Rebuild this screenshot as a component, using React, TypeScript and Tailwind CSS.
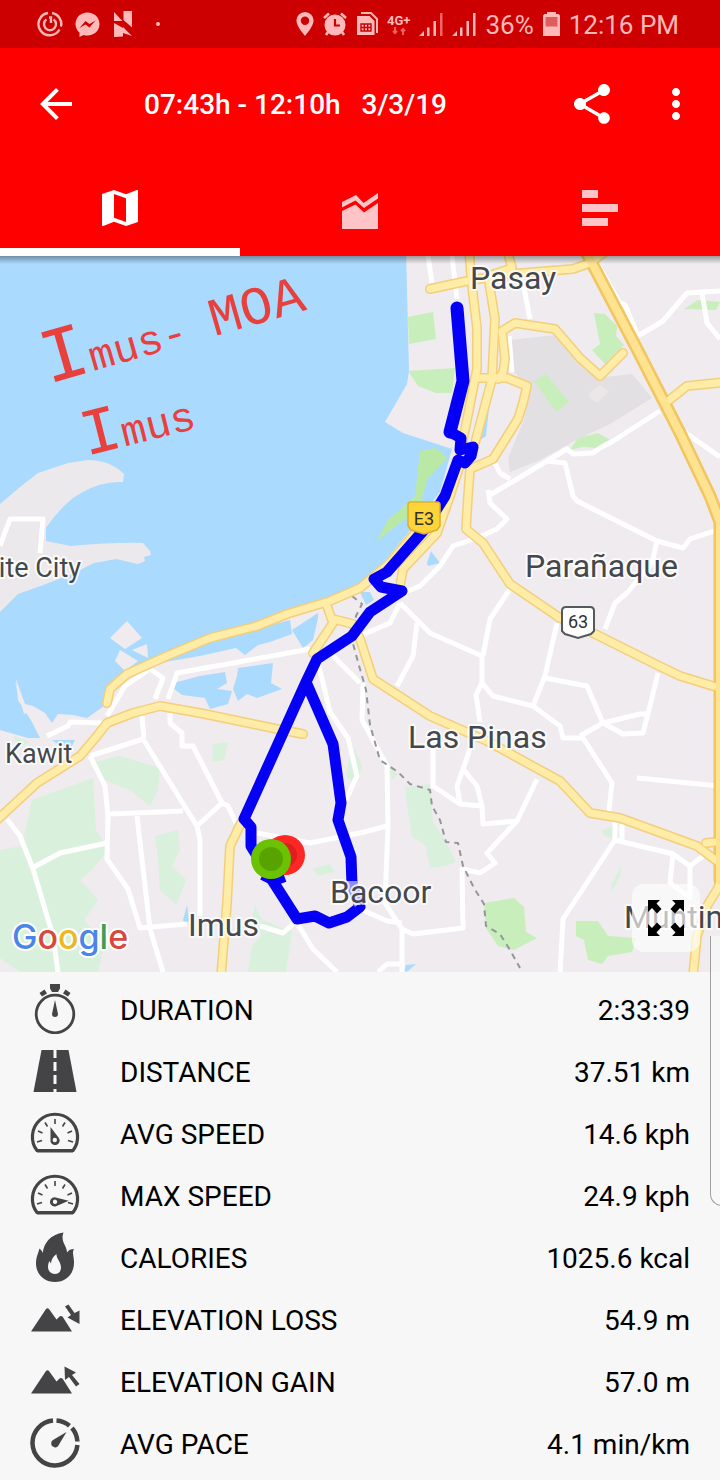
import type { ReactNode } from "react";
import { MdArrowBack, MdMap, MdMoreVert, MdShare } from "react-icons/md";

const MAJOR_ROADS = [
  "469,250 472,286 477,328 477,369 473,389 465,430 460,452",
  "507,250 512,268 488,276 495,319 492,379 475,443",
  "430,289 467,281 510,274 573,269 590,263 605,252",
  "498,379 503,373 505,359 502,331 515,323 555,329 580,358 600,376 623,353",
  "475,378 507,378 527,386 523,403 518,419 493,459 470,469 468,496 466,529 483,543 510,584 560,618 593,633 653,663 680,676 726,690",
  "668,401 687,386 726,382",
  "463,456 450,496 437,533 403,569 400,586",
  "430,512 415,533 390,563 360,588 330,601 287,614 257,626 210,638 167,656 127,674 110,689 107,703",
  "327,606 333,623 313,653",
  "333,619 353,624 360,639 373,679 430,716 487,741 560,781 590,813 620,818 697,846 726,868",
  "-4,821 37,783 80,756 97,736 107,723 133,713 160,706 200,713 277,729 303,734",
  "241,823 230,846 227,903 221,976",
  "706,843 726,841",
  "726,862 718,888 707,906 697,936 693,976",
];

const HIGHWAYS = ["584,248 637,349 680,433 710,496 720,522 720,880"];

const MINOR_ROADS = [
  "428,256 432,283",
  "452,256 457,299",
  "523,283 530,319",
  "509,336 512,372",
  "593,256 620,303 625,305 638,336 663,321 687,293 720,291",
  "702,293 707,323 720,339",
  "488,496 517,479 547,461 567,449 573,454 593,453 600,448 613,441 660,411",
  "547,461 565,463 573,496 577,501 657,541 683,548 690,539 720,529",
  "493,459 500,473 510,479",
  "683,431 720,457",
  "488,490 490,503 507,519 497,529 477,538 453,546 440,566 420,586 400,594",
  "400,603 430,633 482,656 482,683 493,696 533,706 560,726 563,738 583,738 612,783 608,820",
  "510,589 490,619 483,656",
  "417,623 413,656 397,686",
  "482,683 476,695 480,722",
  "557,623 545,676 533,706",
  "545,678 587,686 603,723 640,714 648,714 658,673",
  "580,736 603,723 623,734 643,733 648,714",
  "657,541 652,563 627,593 615,603 605,629",
  "360,636 390,623 400,603",
  "363,683 362,720 387,766 388,826 385,903 402,929 402,972",
  "257,833 310,843 360,833 387,826",
  "433,749 433,786 460,804 482,806 483,824 517,821 537,779",
  "470,749 457,786 460,804",
  "463,769 477,786 482,806",
  "517,821 487,853 495,863 480,873 462,869 463,928 413,934 402,929",
  "637,778 720,786",
  "615,820 615,840 563,919 560,972",
  "622,824 622,840",
  "615,840 673,854 690,866 703,856",
  "673,854 670,883 690,898 690,866",
  "360,909 387,921 402,923",
  "378,972 387,964 402,964",
  "0,546 10,519 43,519 40,553",
  "107,716 125,686 150,669 163,678 155,699",
  "168,699 177,673 233,663 310,649",
  "47,736 68,726 70,722 103,723",
  "142,716 144,738",
  "170,713 170,723 182,733 182,746 193,746 222,803 228,806 236,823",
  "318,662 330,712 348,738 357,776 346,800",
  "333,656 360,683",
  "90,756 143,739 197,826 200,840 200,916",
  "197,826 222,803",
  "110,814 183,811",
  "90,756 105,786 108,816 107,859 128,889 140,928 187,924",
  "137,816 143,869 150,929 163,972",
  "7,819 20,836 33,869 53,936 58,972",
  "32,868 60,853 107,843",
  "260,926 283,933 293,924",
  "297,923 313,949 337,972",
];

const WATER = [
  "0,250 406,250 409,371 407,384 385,422 403,433 452,449 440,492 412,528 372,577 350,597 330,600 260,624 210,637 127,673 108,690 104,706 87,718 73,715 58,714 52,723 45,713 33,706 25,704 16,679 18,700 32,722 40,738 28,738 0,730",
  "177,682 200,676 225,672 227,683 217,689 232,691 228,704 210,709 205,698 182,695 173,688",
  "238,668 273,663 271,683 282,689 257,698 247,694 238,701 233,689 237,676",
  "292,630 318,613 318,618 313,640 303,648",
  "150,664 200,644 260,628 290,620 292,634 270,642 258,645 245,655 236,648 200,656 165,662",
  "427,563 431,551 440,563 428,566",
  "360,592 370,592 374,600 366,605",
  "183,920 187,905 189,921 185,924",
  "404,972 406,965 416,964 408,971",
  "52,740 75,740 70,750 60,746",
  "484,420 489,408 486,436 480,440",
];

const ISLANDS = [
  "127,621 142,638 125,649 110,638",
  "147,644 148,658 132,650",
  "120,650 138,661 125,671 115,661",
  "281,642 292,635 295,641",
  "14,679 22,702 30,712 24,714",
];

const FARMS = [
  "32,800 60,790 93,778 96,830 108,850 92,870 80,880 98,900 84,920 104,944 98,972 20,972 0,958 0,850 22,846",
  "94,762 120,756 160,768 158,790 150,806 130,790 100,778",
  "155,836 178,830 180,850 172,866 186,880 176,905 160,890 158,860",
  "213,744 228,742 224,760 212,762",
  "255,905 262,920 292,932 286,972 248,972 252,946 262,935 250,925",
  "405,787 430,784 433,822 444,838 456,862 446,866 430,868 426,846 412,836 408,812",
  "313,868 330,864 334,872 318,876",
  "352,744 362,766 356,786 346,776",
  "602,830 613,826 612,838 604,836",
  "611,886 622,864 620,876 612,892",
  "388,766 398,774 392,780",
  "14,736 30,742 18,748",
];

const PARKS = [
  "408,317 433,312 436,339 409,344",
  "408,371 455,368 452,393 436,393 418,386",
  "594,313 605,314 617,326 616,336 624,345 605,364 592,350 600,344",
  "534,381 546,374 569,402 556,412",
  "570,450 578,438 598,433 612,441 598,448 583,447",
  "684,309 698,300 720,302 716,310",
  "484,903 514,898 524,907 526,932 537,938 514,950 498,946 486,928",
  "576,921 598,921 608,936 636,938 632,952 608,956 602,964 588,960 584,940 576,936",
];

const AIRPORT = [
  "510,340 556,335 580,360 596,378 632,374 652,398 610,424 576,440 540,460 510,472 508,458 524,420 530,388 512,370",
];

const ROUTE =
  "457,308 463,381 450,432 461,438 460,450 473,447 471,456 465,463 458,460 445,496 423,531 387,572 374,579 381,587 402,591 370,612 352,636 317,659 306,682 244,819 251,827 251,846 274,883 297,919 315,916 329,923 347,917 360,907 352,885 351,857 338,820 341,803 333,744 306,682";

const BORDER =
  "352,596 362,604 356,616 352,640 358,662 366,690 370,725 380,760 398,772 410,784 430,790 432,806 440,820 446,842 458,843 463,866 474,888 484,904 486,926 500,934 510,950 520,968";

const LABELS: {
  name: string;
  x: number;
  y: number;
  size: number;
  anchor?: "end";
}[] = [
  { name: "Pasay", x: 470, y: 289, size: 32 },
  { name: "ite City", x: 81, y: 577, size: 27, anchor: "end" },
  { name: "Parañaque", x: 525, y: 577, size: 32 },
  { name: "Las Pinas", x: 408, y: 748, size: 32 },
  { name: "Kawit", x: 5, y: 763, size: 27 },
  { name: "Bacoor", x: 330, y: 903, size: 32 },
  { name: "Imus", x: 188, y: 936, size: 32 },
  { name: "Muntin", x: 624, y: 928, size: 32 },
];

export default function App() {
  return (
    <div className="relative w-full overflow-hidden bg-[#f7f7f7] font-['Roboto',sans-serif] text-black">
      <StatusBar />
      <Header />
      <RouteMap />
      <Stats />
      {/* edge panel handle */}
      <div
        aria-hidden
        className="absolute -right-3 bottom-[274px] h-[270px] w-[22px] rounded-bl-xl border-b border-l border-[#a0a0a0] bg-[#f8f8f8]/80"
      />
    </div>
  );
}

function StatusBar() {
  return (
    <div className="flex h-12 items-center justify-between bg-[#cc0000] pr-[41px] pl-[37px] text-[26px] text-[#ffb9b9]">
      <div className="flex items-center gap-3">
        <svg className="h-[26px] w-[26px]" viewBox="0 0 26 26" fill="none" stroke="currentColor" strokeWidth="2.4">
          <path d="M11 2A11.200 11.200 0 1 0 22.500 18.500M15 2a11.200 11.200 0 0 1 9 13.500" />
          <path d="M9.400 8.400a6 6 0 1 0 7.200 0M12 6.500h2v5.500" />
        </svg>
        <svg className="h-[25px] w-[25px]" viewBox="0 0 25 25">
          <path
            fill="currentColor"
            d="M12.5.5C5.600.5.500 5.500.500 12c0 3.600 1.500 6.500 4 8.600V25l4-2.100c1.200.400 2.600.600 4 .600 6.900 0 12-5 12-11.500S19.400.5 12.500.5z"
          />
          <path d="M4.500 16l6-7 4 3 6-3.500-6 7-4-3z" fill="#cc0000" />
        </svg>
        <svg className="ml-0.5 h-[26px] w-[18px]" viewBox="0 0 18 26" fill="currentColor">
          <path d="M0 1l8.500 9H0zM9.500 0H18v16.500L9.500 9zM0 12l9 5v8.500l-9 .5zM9 16l9 9-9-3z" />
        </svg>
        <span className="ml-3 h-1 w-1 rounded-full bg-[#ffb9b9]" />
      </div>
      <div className="flex items-center gap-[9px]">
        <svg className="h-6 w-[18px]" viewBox="0 0 18 24" fill="currentColor" fillRule="evenodd">
          <path d="M9 0a8.600 8.600 0 0 0-8.600 8.600C.400 14.500 9 24 9 24s8.600-9.500 8.600-15.400A8.600 8.600 0 0 0 9 0zm0 4.600a4.200 4.200 0 1 1 0 8.400 4.200 4.200 0 0 1 0-8.400z" />
        </svg>
        <svg className="h-6 w-6" viewBox="0 0 24 24">
          <circle cx="12" cy="13" r="10.500" fill="currentColor" />
          <path d="M1 6l5-4.500M23 6l-5-4.500M5 20l-2 3M19 20l2 3" stroke="currentColor" strokeWidth="2.600" />
          <path d="M12 7v6.500h5" fill="none" stroke="#cc0000" strokeWidth="2.200" />
        </svg>
        <svg className="h-6 w-[22px]" viewBox="0 0 22 24" fill="none" stroke="currentColor" strokeWidth="2">
          <path d="M5 1h10l6 6v14" />
          <path d="M2 5h11l4.500 4.500V22H2z" fill="currentColor" />
          <path d="M5 12h10v7H5zM8.300 12v7M11.700 12v7M5 15.500h10" stroke="#cc0000" strokeWidth="1.400" />
        </svg>
        <div className="flex flex-col items-center">
          <span className="text-[13px] leading-[13px] font-bold">4G+</span>
          <svg className="h-2 w-4" viewBox="0 0 16 8" fill="none" stroke="#f06060" strokeWidth="2">
            <path d="M4 0v6M2 4l2 2 2-2M12 8V2M10 4l2-2 2 2" />
          </svg>
        </div>
        <Signal weak />
        <Signal />
        <span className="pt-0.5">36%</span>
        <svg className="h-6 w-[17px]" viewBox="0 0 17 24">
          <path d="M4 0h9v2h2.500L17 3.500V24H0V3.500L1.500 2H4z" fill="currentColor" />
          <path d="M2.500 5h12v9.500h-12z" fill="#e05c5c" />
        </svg>
        <span className="pt-0.5">12:16 PM</span>
      </div>
    </div>
  );
}

function Signal({ weak }: { weak?: boolean }) {
  return (
    <svg className="h-6 w-6" viewBox="0 0 24 24" fill="currentColor">
      <path d="M0 24l5-5v5zM8 15.500h2.500V24H8zM14.500 9H17v15h-2.500z" />
      <path d="M21 1h2.500v23H21z" fill={weak ? "#ee6666" : "currentColor"} />
    </svg>
  );
}

function Header() {
  return (
    <header className="bg-[#ff0000] text-white">
      <div className="flex h-28 items-center pr-5 pl-8">
        <button aria-label="Back">
          <MdArrowBack size={48} />
        </button>
        <h1 className="ml-16 flex-1 pt-0.5 text-[28px] font-medium whitespace-pre">
          {"07:43h - 12:10h   3/3/19"}
        </h1>
        <button aria-label="Share">
          <MdShare size={48} />
        </button>
        <button aria-label="More options" className="ml-9">
          <MdMoreVert size={48} />
        </button>
      </div>
      <nav className="grid h-24 grid-cols-3">
        <Tab label="Map" active>
          <MdMap size={48} />
        </Tab>
        <Tab label="Charts">
          <svg className="h-12 w-12" viewBox="0 0 48 48" fill="currentColor">
            <path d="M6 18l14-7 7.500 8L42 9v5.500L28 24l-8.500-7.500L6 23.500zM6 27l13.500-6.500L28 28.500l14-9.500v26H6z" />
          </svg>
        </Tab>
        <Tab label="Splits">
          <svg className="h-12 w-12" viewBox="0 0 48 48" fill="currentColor">
            <path d="M6 6h16v8H6zM6 20h36v8H6zM6 34h26v8H6z" />
          </svg>
        </Tab>
      </nav>
    </header>
  );
}

function Tab({ label, active, children }: { label: string; active?: boolean; children: ReactNode }) {
  return (
    <button
      aria-label={label}
      className={`flex items-center justify-center border-y-8 border-t-transparent ${
        active ? "border-b-white text-white" : "border-b-transparent text-[#ffc4c8]"
      }`}
    >
      {children}
    </button>
  );
}

function RouteMap() {
  return (
    <section className="relative h-[716px] w-full overflow-hidden bg-[#efebee]">
      <svg className="h-full w-full" viewBox="0 256 720 716" preserveAspectRatio="xMidYMid slice">
        <Areas shapes={FARMS} className="fill-[#d9f1dc]" />
        <Areas shapes={AIRPORT} className="fill-[#e2e0e2]" />
        <path d="M588 394l12-9 9 6-6 6-6 6-5-4z" fill="#ede6e8" />
        <Areas shapes={PARKS} className="fill-[#c8efbb]" />
        <Areas shapes={WATER} className="fill-[#abdaff]" />
        <Areas shapes={ISLANDS} className="fill-[#efebee]" />
        <path
          d="M0 504l20-17 18-14 30-10 20-3q22 0 36 14l-1 8q-22-1-42 11l-8 5q-15 12-27 30v13l25 5q45-4 72-3l7 8 1 4-7 2 1 4-7 3-22-5-22 4-18 9-30 12-28 10-18 18z"
          fill="#ebe9eb"
        />
        <path d="M420 451l16-3 11 10-20 22-8 30-22 15-21 17 12-22 27-24z" fill="#b9e9a5" />

        <g fill="none" strokeLinejoin="round">
          {MINOR_ROADS.map((points) => (
            <polyline key={points} points={points} stroke="#ffffff" strokeWidth="5" />
          ))}
          <polyline points={BORDER} stroke="#96969a" strokeWidth="2" strokeDasharray="6 5" />
          <g strokeLinecap="round">
            {MAJOR_ROADS.map((points) => (
              <polyline key={points} points={points} stroke="#f3cf7c" strokeWidth="10" />
            ))}
            {HIGHWAYS.map((points) => (
              <polyline key={points} points={points} stroke="#f2c55f" strokeWidth="13" />
            ))}
            {MAJOR_ROADS.map((points) => (
              <polyline key={points} points={points} stroke="#ffeca6" strokeWidth="7" />
            ))}
            {HIGHWAYS.map((points) => (
              <polyline key={points} points={points} stroke="#ffe391" strokeWidth="8" />
            ))}
          </g>
          <polyline points={ROUTE} stroke="#0500f5" strokeWidth="11" strokeLinecap="round" />
          <path d="M457 308l6 73-13 51" stroke="#0500f5" strokeWidth="13" strokeLinecap="round" />
          <path d="M262 876l12 6 11-4" stroke="#0500f5" strokeWidth="8" />
        </g>

        <circle cx="285" cy="855" r="20" fill="#ff2626" />
        <circle cx="285" cy="855" r="12" fill="#dd1f1f" />
        <circle cx="271" cy="859" r="20" fill="#6bc200" />
        <circle cx="271" cy="859" r="12" fill="#58a300" />
        <path d="M346 881h11l6 20-8 6-6-10z" fill="#ffffff" opacity="0.55" />

        <path d="M411 502h26q3 0 3 3v21l-3 4-13 4-13-4-3-4v-21q0-3 3-3z" fill="#fdd43a" stroke="#dcae2e" strokeWidth="1.500" />
        <path d="M566 607h24q4 0 4 4v20l-3 3-13 4-13-4-3-3v-20q0-4 4-4z" fill="#ffffff" stroke="#56595c" strokeWidth="2" />
        <g className="font-['Roboto',sans-serif] text-[18px]" fill="#303030" textAnchor="middle">
          <text x="424" y="525">E3</text>
          <text x="578" y="628">63</text>
        </g>

        <g
          className="font-['Roboto',sans-serif]"
          fill="#44484c"
          stroke="#ffffff"
          strokeOpacity="0.8"
          strokeWidth="4"
          strokeLinejoin="round"
          paintOrder="stroke"
        >
          {LABELS.map(({ name, x, y, size, anchor }) => (
            <text key={name} x={x} y={y} fontSize={size} textAnchor={anchor}>
              {name}
            </text>
          ))}
        </g>

        {/* handwritten note */}
        <g className="font-['Liberation_Mono',monospace]" fill="#e8403c">
          <text x="48" y="384" transform="rotate(-16 48 384)" fontSize="78">
            I<tspan fontSize="42">mus- </tspan>
            <tspan fontSize="54">MOA</tspan>
          </text>
          <text x="86" y="456" transform="rotate(-14 86 456)" fontSize="66">
            I<tspan fontSize="42">mus</tspan>
          </text>
        </g>

        <text
          x="12"
          y="949"
          className="font-['Inter',sans-serif] text-[34px] font-medium"
          stroke="#ffffff"
          strokeWidth="4"
          strokeLinejoin="round"
          paintOrder="stroke"
        >
          <tspan fill="#4a86e8">G</tspan>
          <tspan fill="#d8483c">o</tspan>
          <tspan fill="#ecb720">o</tspan>
          <tspan fill="#4a86e8">g</tspan>
          <tspan fill="#3f9d58">l</tspan>
          <tspan fill="#d8483c">e</tspan>
        </text>
      </svg>
      <div className="absolute inset-x-0 top-0 h-2 bg-linear-to-b from-black/35 to-transparent" />
      <button
        aria-label="Full screen"
        className="absolute right-5 bottom-5 flex h-[68px] w-[68px] items-center justify-center rounded-xl bg-white/65"
      >
        <svg className="h-9 w-9" viewBox="0 0 36 36">
          <path
            d="M0 0h12L8.500 3.500l5 5.500L9 13.500l-5-5.500L0 12zM36 0v12l-4-4-5 5.500L22.500 9l5-5.500L24 0zM0 36V24l4 4 5-5.500 4.500 4.500-5 5.500L12 36zM36 36H24l3.500-3.500-5-5.500 4.500-4.500 5 5.500 4-4z"
            fill="#000000"
          />
        </svg>
      </button>
    </section>
  );
}

function Areas({ shapes, className }: { shapes: string[]; className: string }) {
  return (
    <g className={className}>
      {shapes.map((points) => (
        <polygon key={points} points={points} />
      ))}
    </g>
  );
}

const STATS: { label: string; value: string; icon: ReactNode }[] = [
  { label: "DURATION", value: "2:33:39", icon: <StopwatchIcon /> },
  { label: "DISTANCE", value: "37.51 km", icon: <RoadIcon /> },
  { label: "AVG SPEED", value: "14.6 kph", icon: <GaugeIcon /> },
  { label: "MAX SPEED", value: "24.9 kph", icon: <GaugeIcon max /> },
  { label: "CALORIES", value: "1025.6 kcal", icon: <FlameIcon /> },
  { label: "ELEVATION LOSS", value: "54.9 m", icon: <MountainIcon /> },
  { label: "ELEVATION GAIN", value: "57.0 m", icon: <MountainIcon up /> },
  { label: "AVG PACE", value: "4.1 min/km", icon: <PaceIcon /> },
];

function Stats() {
  return (
    <dl className="px-[30px] py-1.5 text-[28px]">
      {STATS.map(({ label, value, icon }) => (
        <div key={label} className="flex h-[62px] items-center">
          {icon}
          <dt className="ml-10 flex-1 pt-1">{label}</dt>
          <dd className="pt-1">{value}</dd>
        </div>
      ))}
    </dl>
  );
}

function StatIcon({ children }: { children: ReactNode }) {
  return (
    <svg className="h-[50px] w-[50px]" viewBox="0 0 50 50" fill="#444446">
      {children}
    </svg>
  );
}

function StopwatchIcon() {
  return (
    <StatIcon>
      <circle cx="25" cy="30" r="18.800" fill="none" stroke="#444446" strokeWidth="2.800" />
      <path d="M20 0h10v4.500L28 8h-6l-2-3.500zM9.500 9l5-3.500 2.500 4-5 3zM40.500 9l-5-3.500-2.500 4 5 3zM25 16l3 14a3 3 0 1 1-6 0z" />
    </StatIcon>
  );
}

function RoadIcon() {
  return (
    <StatIcon>
      <path d="M11.500 4h27L46.500 46h-43z" />
      <path d="M23.500 4h3v8h-3zM23.500 16h3v9h-3zM23.500 29h3v9h-3zM23.500 43h3v3h-3z" fill="#f7f7f7" />
    </StatIcon>
  );
}

function GaugeIcon({ max }: { max?: boolean }) {
  return (
    <StatIcon>
      <path
        d="M7 42.500A22.600 22.600 0 1 1 43 42.500z"
        fill="none"
        stroke="#444446"
        strokeWidth="3.200"
        strokeLinejoin="round"
      />
      <path d="M7 41h36v3.500H7z" />
      <path
        d="M25 11v5M15 14.500l2.500 4M35 14.500l-2.500 4M8 23l4.500 2M42 23l-4.500 2M7 34l5-1.500M43 34l-5-1.500"
        stroke="#444446"
        strokeWidth="1.600"
      />
      <g className={max ? "origin-[25px_32px] rotate-[104deg]" : ""}>
        <path d="M20.500 19l8 10.500a4.600 4.600 0 1 1-8 2z" />
        <circle cx="24.800" cy="32" r="2.200" fill="#f7f7f7" />
      </g>
    </StatIcon>
  );
}

function FlameIcon() {
  return (
    <StatIcon>
      <path d="M33.500.5c-2 5-.5 9 1 12 1.300 2.800 2.500 5 2.500 8 1.500-2.500 4-3.500 7-3.500-2 3-.5 6 0 12.500C44.500 42 36 50 25 50S5.500 42 6 30c.2-5 2-8 3.500-13.500 1.800 1.500 3 3 3.200 4.500C14 11 20 2.500 33.500.5z" />
      <path
        d="M26.500 22c-.5 4 4.500 8 4.500 13.500 0 4-2.500 6.500-6 6.500s-7-2.500-7-7c0-2.500.5-4 1.500-6l1.500 2.500c.3-4 2-7 5.500-9.500z"
        fill="#f7f7f7"
      />
    </StatIcon>
  );
}

function MountainIcon({ up }: { up?: boolean }) {
  return (
    <StatIcon>
      <path d="M1 37.500L16 15q1.500-1.500 3 0l7.500 10.500 3-3q1.500-1.200 3 0L42 37.500z" />
      {up ? (
        <path d="M34.500 10.500l11.500 6-4 2.500 7.500 9-3.500 2.500-7-9.500-4 3z" />
      ) : (
        <path d="M35 12.500l3.500-2 6 8.500 5-2.500V30l-12-6.500 3.500-2.500z" />
      )}
    </StatIcon>
  );
}

function PaceIcon() {
  return (
    <StatIcon>
      <g fill="none" stroke="#444446" strokeWidth="4.500">
        <path d="M23 2.500A22.500 22.500 0 1 0 47.400 27" />
        <path d="M26.500 2.500A22.500 22.500 0 0 1 39.500 7.700M42 10A22.500 22.500 0 0 1 47.400 23.500" />
      </g>
      <path d="M36.500 14L29 26.500a4 4 0 1 1-6-4.500z" />
    </StatIcon>
  );
}
